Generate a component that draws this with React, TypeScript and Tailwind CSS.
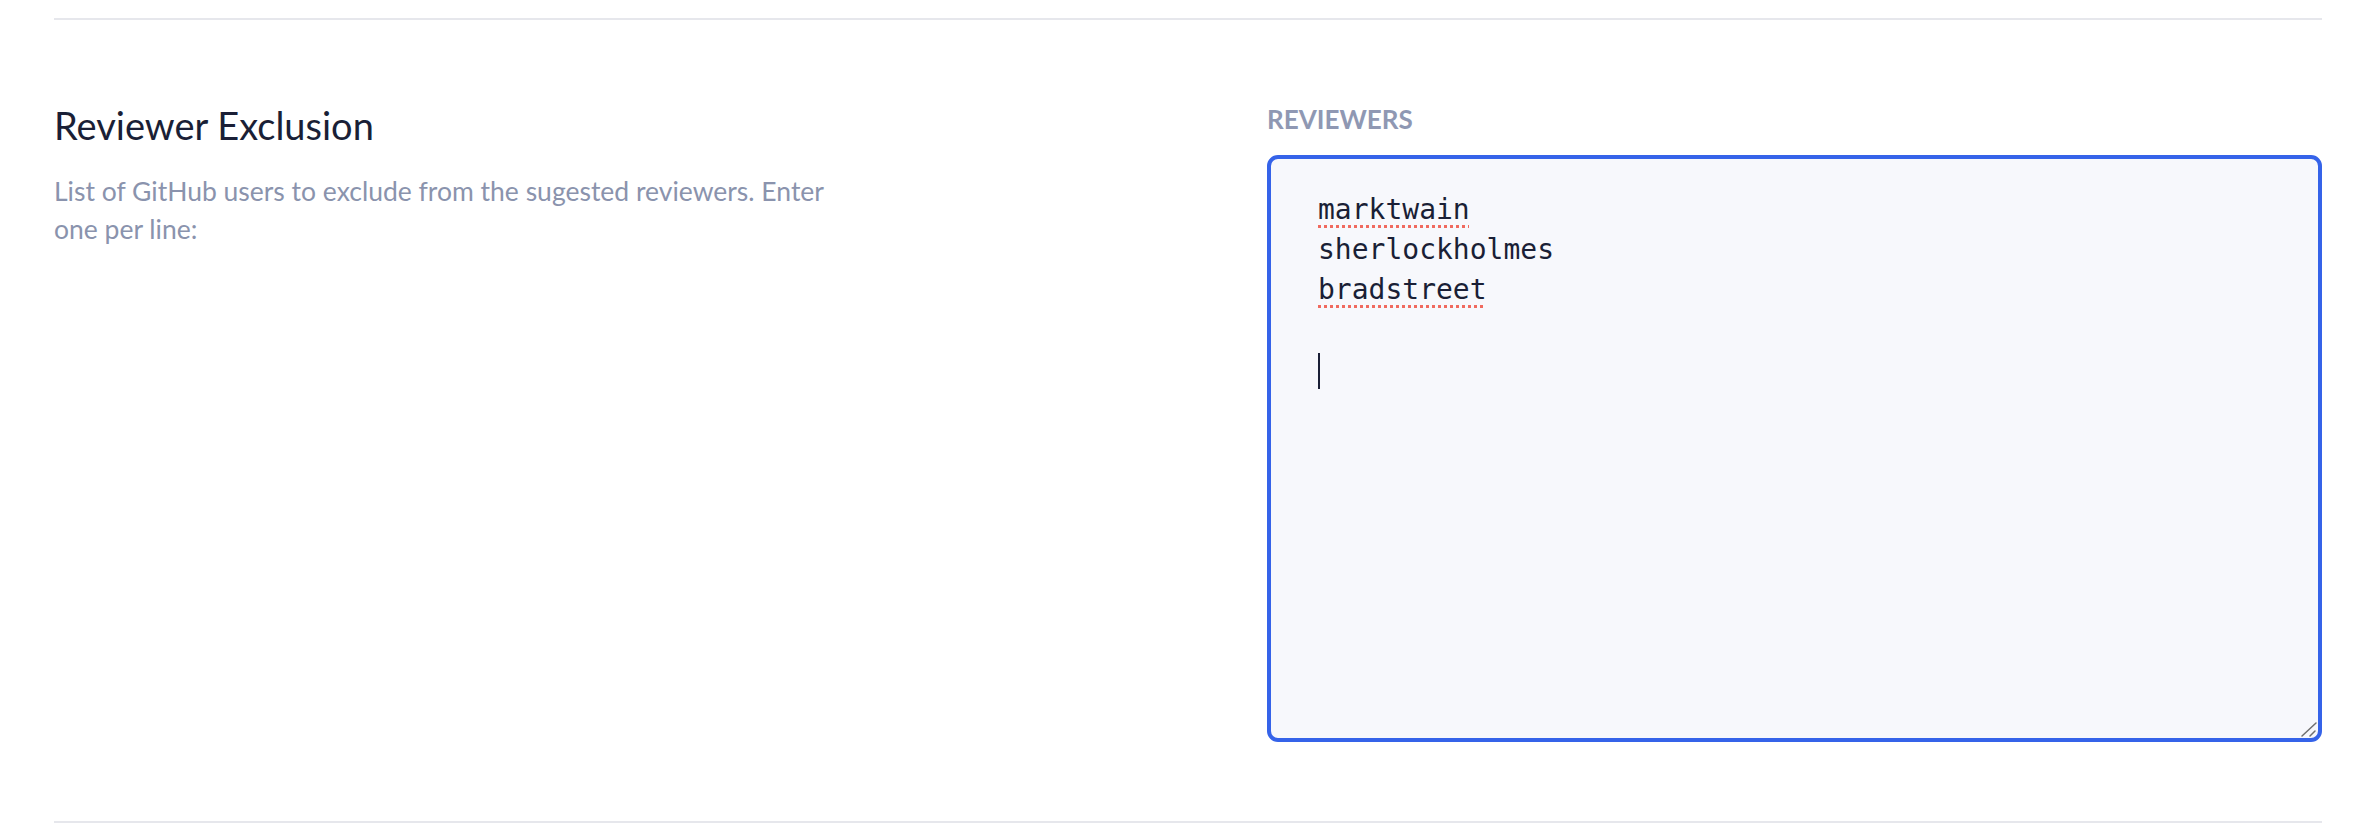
import React from "react";

const reviewers = ["marktwain", "sherlockholmes", "bradstreet"];
const flagged = new Set(["marktwain", "bradstreet"]);

export default function App() {
    return (
        <div className="min-h-screen bg-white pl-[54px] pr-[34px] pt-[18px] font-['Lato','Liberation_Sans',sans-serif]">
            <section className="grid grid-cols-[1055px_1055px] justify-between border-y-2 border-[#e6e7ec] pt-[81px] pb-[79px]">
                {/* Left: title and help text */}
                <div>
                    <h2 className="text-[38px] leading-[48px] font-normal text-[#1a1f36]">
                        Reviewer Exclusion
                    </h2>
                    <p className="mt-[23px] max-w-[790px] text-[26.5px] leading-[38px] text-[#8a93ad]">
                        List of GitHub users to exclude from the sugested reviewers. Enter one per line:
                    </p>
                </div>

                {/* Right: the reviewer list */}
                <div className="pt-[2px]">
                    <label className="block text-[26px] leading-[32px] font-bold uppercase text-[#8f98b3]">
                        Reviewers
                    </label>
                    <div className="relative mt-[20px] h-[587px] rounded-[11px] border-4 border-[#3563e9] bg-[#f7f8fc] pl-[47px] pt-[31px] font-['DejaVu_Sans_Mono','Liberation_Mono',monospace] text-[28px] leading-[40px] text-[#1a1f36]">
                        {reviewers.map((name) => (
                            <div key={name}>
                                <span
                                    className={
                                        flagged.has(name)
                                            ? "underline decoration-dotted decoration-[#f06a5f] decoration-[3px] underline-offset-[6px]"
                                            : ""
                                    }
                                >
                                    {name}
                                </span>
                            </div>
                        ))}
                        <div className="h-[40px]" />
                        <div className="flex h-[40px] items-center">
                            <span className="mt-[2px] inline-block h-[36px] w-[2px] bg-[#1a1f36]" />
                        </div>

                        {/* resize grip */}
                        <svg
                            className="absolute right-0 bottom-0 h-[18px] w-[18px]"
                            viewBox="0 0 18 18"
                            fill="none"
                            stroke="#6f6f6f"
                            strokeWidth="1.5"
                            strokeLinecap="round"
                        >
                            <line x1="2" y1="16" x2="16" y2="3" />
                            <line x1="10" y1="16" x2="15" y2="11" />
                        </svg>
                    </div>
                </div>
            </section>
        </div>
    );
}
